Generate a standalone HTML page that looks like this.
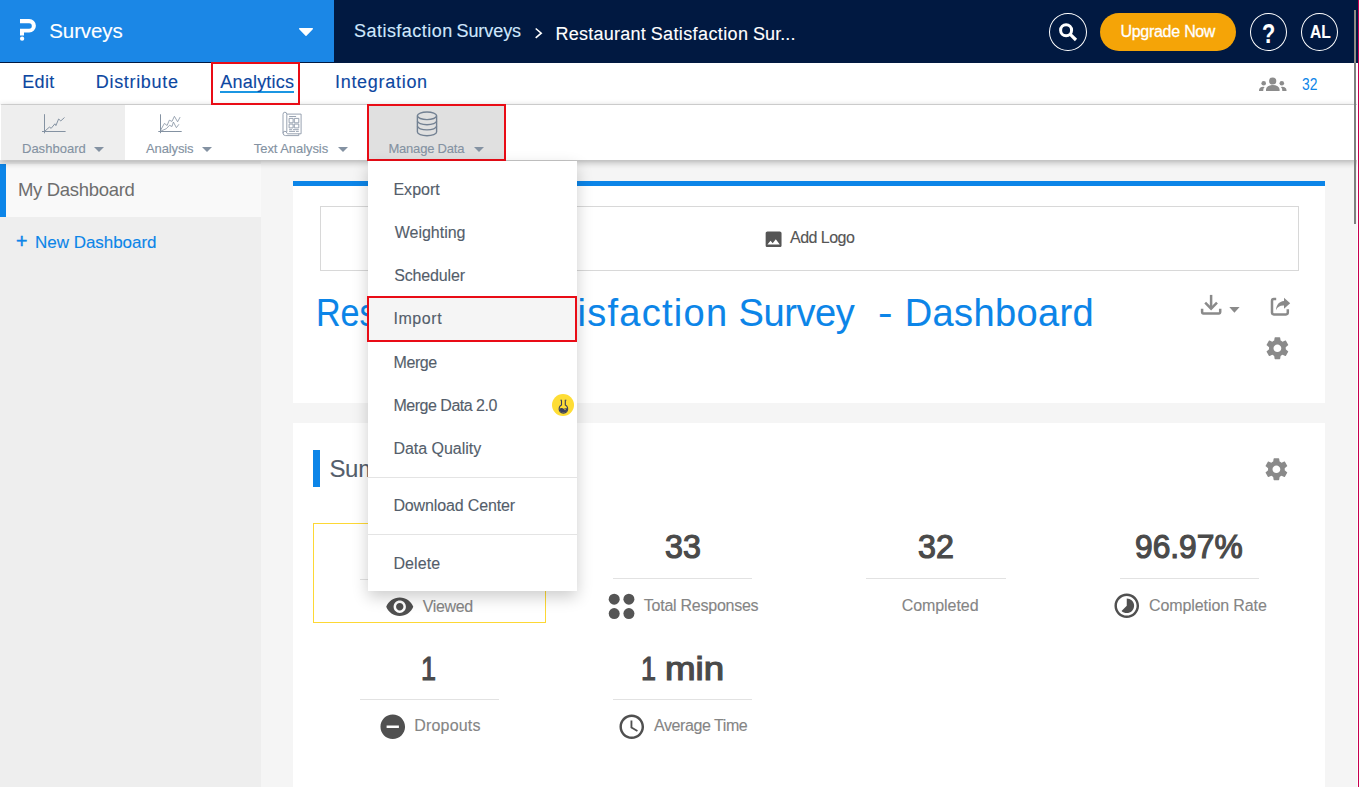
<!DOCTYPE html>
<html lang="en">
<head>
<meta charset="utf-8">
<title>Restaurant Satisfaction Survey - Dashboard</title>
<style>
*{box-sizing:border-box;margin:0;padding:0}
html,body{width:1359px;height:787px;overflow:hidden;background:#f5f5f5;font-family:"Liberation Sans",sans-serif;}
body{position:relative}
.abs{position:absolute}
svg{position:absolute;overflow:visible}
.t{position:absolute;white-space:nowrap;line-height:1;z-index:8;-webkit-text-stroke:0.12px}
#hdr{left:0;top:0;width:1359px;height:63px;background:#011941}
#hdrblue{left:0;top:0;width:334px;height:62px;background:#1b87e6}
#tabs{left:0;top:63px;width:1359px;height:42px;background:#fff}
#tabsline{left:1px;top:104px;width:1356px;height:1px;background:#dcdcdc}
#tool{left:0;top:105px;width:1359px;height:55px;background:#fff;box-shadow:0 2px 7px rgba(0,0,0,.3);z-index:5}
#tooldash{left:1px;top:105px;width:124px;height:55px;background:#eeeeee;z-index:6}
#toolmd{left:367px;top:104px;width:139px;height:57px;background:#e0e0e0;border:2px solid #e90c16;z-index:6}
#anbox{left:211px;top:62px;width:89px;height:43px;border:2px solid #e90c16;z-index:6}
#anul{left:220px;top:91px;width:74px;height:2px;background:#1b96e2}
#side{left:0;top:161px;width:261px;height:626px;background:#eeeeee}
#sideitem{left:0;top:164px;width:261px;height:53px;background:#f9f9f9;border-left:6px solid #0c85e8}
#card1{left:293px;top:181px;width:1032px;height:222px;background:#fff;border-top:5px solid #0c85e8}
#logo{left:320px;top:206px;width:979px;height:65px;border:1px solid #d8d8d8;background:#fff}
#card2{left:293px;top:423px;width:1032px;height:364px;background:#fff}
#sumbar{left:313px;top:450px;width:7px;height:37px;background:#0c85e8}
#ybox{left:313px;top:523px;width:233px;height:100px;border:1px solid #fdd835}
.hr{position:absolute;height:1px;background:#e2e2e2;width:139px}
#dd{left:368px;top:161px;width:209px;height:430px;background:#fff;box-shadow:0 6px 15px rgba(0,0,0,.2);z-index:20}
#ddimp{left:367px;top:296px;width:210px;height:46px;background:#f5f5f5;border:2px solid #e90c16;z-index:21}
.ddsep{position:absolute;left:368px;width:209px;height:1px;background:#e4e4e4;z-index:22}
#flask{left:552px;top:393.800px;width:22.200px;height:22.200px;border-radius:50%;background:#fedd35;z-index:22}
.circ{position:absolute;width:38px;height:38px;border:1px solid #fff;border-radius:50%;top:13px}
#upg{left:1100px;top:13px;width:136px;height:38px;border-radius:19px;background:#f5a407}
#sb{left:1354px;top:10px;width:2px;height:214px;background:linear-gradient(#8f8b85 0,#8f8b85 53px,#7f7f7f 53px);z-index:40}
#sbw{left:1357px;top:63px;width:1px;height:724px;background:#fff;z-index:40}
#sbp{left:1358px;top:0;width:1px;height:787px;background:#c8004f;z-index:40}
.car{position:absolute;width:0;height:0;border-left:5px solid transparent;border-right:5px solid transparent;border-top:5px solid #8492a2;z-index:7}
.z7{z-index:7}
.tw span{position:absolute;top:0}
</style>
</head>
<body>
<header>
<div id="hdr" class="abs"></div>
<div id="hdrblue" class="abs"></div>
<div class="circ" style="left:1048.9px;width:38.3px;height:38.4px;top:12.7px"></div>
<div id="upg" class="abs"></div>
<div class="circ" style="left:1249.9px;width:37.3px;height:38.4px;top:12.9px"></div>
<div class="circ" style="left:1300.9px;width:37.3px;height:38.4px;top:12.9px"></div>
<svg style="left:19px;top:18px;z-index:8" width="18" height="24" viewBox="19 18 18 24"><path d="M20 19H29.200a6.700 6.750 0 0 1 0 13.500H24V35.600H20V28.700H29.200a2.600 2.750 0 0 0 0-5.500H20Z" fill="#fff"/><circle cx="22.100" cy="38.700" r="2.150" fill="#fff"/></svg>
<svg style="left:298px;top:27px;z-index:8" width="16" height="10" viewBox="298 27 16 10"><path d="M299.700 28.700H312.300L306 35.300Z" fill="#fff" stroke="#fff" stroke-width="1.400" stroke-linejoin="round"/></svg>
<svg style="left:533px;top:26px;z-index:8" width="10" height="14" viewBox="533 26 10 14"><path d="M535.700 28.500L541.200 33.200L535.700 37.900" fill="none" stroke="#fff" stroke-width="1.600"/></svg>
<svg style="left:1056px;top:20px;z-index:8" width="24" height="24" viewBox="1056 20 24 24"><circle cx="1066.1" cy="30.2" r="5.5" fill="none" stroke="#fff" stroke-width="3"/><path d="M1070.3 34.4L1076 40" stroke="#fff" stroke-width="3.2" stroke-linecap="butt"/></svg>
<div class="t" style="left:49.26px;top:21px;font-size:20.5px;color:#fff;letter-spacing:-0.095px;">Surveys</div>
<div class="t" style="left:1262.02px;top:20px;font-size:27.5px;color:#fff;font-weight:700;transform:scaleX(0.7872);transform-origin:0 0;">?</div>
<div class="t" style="left:1309.56px;top:22px;font-size:19px;color:#fff;font-weight:700;transform:scaleX(0.8176);transform-origin:0 0;">AL</div>
<div class="t tw" style="left:0;top:22px;font-size:18px;color:#cfe7fd;"><span style="left:353.94px;letter-spacing:0.484px;">Satisfaction</span> <span style="left:456.44px;letter-spacing:-0.066px;">Surveys</span></div>
<div class="t tw" style="left:0;top:25px;font-size:18px;color:#fff;"><span style="left:555.49px;letter-spacing:0.233px;">Restaurant</span> <span style="left:650.64px;letter-spacing:0.393px;">Satisfaction</span> <span style="left:753.04px;letter-spacing:0.074px;">Sur...</span></div>
<div class="t tw" style="left:0;top:24px;font-size:16px;color:#fff;-webkit-text-stroke:0.3px #fff;"><span style="left:1120.40px;letter-spacing:-0.271px;">Upgrade</span> <span style="left:1184.35px;letter-spacing:-0.577px;">Now</span></div>
</header>
<nav>
<div id="tabs" class="abs"></div>
<div id="tabsline" class="abs"></div>
<div id="anul" class="abs"></div>
<div id="anbox" class="abs"></div>
<svg style="left:1259px;top:77px;z-index:8" width="28" height="15" viewBox="1259 77 28 15" fill="#8c8c8c"><circle cx="1272.7" cy="81" r="3.6"/><path d="M1266 91 v-1.5 a6.8 4.6 0 0 1 13.6 0 V91Z"/><circle cx="1263.7" cy="83.3" r="2.3"/><circle cx="1281.8" cy="83.3" r="2.3"/><path d="M1259 91 v-1 a4 3.2 0 0 1 5.6-2.9 a8 6 0 0 0 -1.4 3.9Z"/><path d="M1286.5 91 v-1 a4 3.2 0 0 0 -5.6-2.9 a8 6 0 0 1 1.4 3.9Z"/></svg>
<div class="t" style="left:22.19px;top:73px;font-size:18px;color:#0d47a1;letter-spacing:0.376px;">Edit</div>
<div class="t" style="left:95.79px;top:73px;font-size:18px;color:#0d47a1;letter-spacing:0.679px;">Distribute</div>
<div class="t" style="left:220.20px;top:73px;font-size:18px;color:#0d47a1;letter-spacing:0.230px;">Analytics</div>
<div class="t" style="left:334.99px;top:73px;font-size:18px;color:#0d47a1;letter-spacing:0.706px;">Integration</div>
<div class="t" style="left:1302.07px;top:77px;font-size:16px;color:#0c85e8;transform:scaleX(0.8649);transform-origin:0 0;-webkit-text-stroke:0;">32</div>
</nav>
<aside>
<div id="side" class="abs"></div>
<div id="sideitem" class="abs"></div>
<div class="t" style="left:17.95px;top:181px;font-size:18.5px;color:#6e6e6e;letter-spacing:-0.311px;-webkit-text-stroke:0;">My Dashboard</div>
<div class="t" style="left:16.09px;top:232px;font-size:19.5px;color:#0c85e8;-webkit-text-stroke:0.5px;">+</div>
<div class="t" style="left:35.07px;top:234px;font-size:17px;color:#0c85e8;letter-spacing:-0.035px;">New Dashboard</div>
</aside>
<main>
<section>
<div id="card1" class="abs"></div>
<div id="logo" class="abs"></div>
<svg style="left:763.45px;top:228.9px;z-index:8" width="21.2" height="20.7" viewBox="0 0 24 24" preserveAspectRatio="none"><path fill="#555" d="M21 19V5c0-1.100-.900-2-2-2H5c-1.100 0-2 .900-2 2v14c0 1.100.900 2 2 2h14c1.100 0 2-.900 2-2zM8.500 13.500l2.500 3.010L14.500 12l4.500 6H5l3.500-4.500z"/></svg>
<svg style="left:1200px;top:294px;z-index:8" width="22" height="22" viewBox="1200 294 22 22" fill="none" stroke="#8a8a8a" stroke-width="2.5"><path d="M1211.1 294.9V308.5"/><path d="M1205.2 302.6L1211.1 308.6L1217 302.6"/><path d="M1202.1 308.8V312.1a1.3 1.3 0 0 0 1.300 1.300H1218.900a1.300 1.300 0 0 0 1.300-1.300V308.800"/></svg>
<svg style="left:1229px;top:307px;z-index:8" width="11" height="6" viewBox="0 0 11 6"><path d="M0.3 0H10.6L5.4 5.800Z" fill="#8a8a8a"/></svg>
<svg style="left:1270px;top:297px;z-index:8" width="21" height="19" viewBox="1270 297 21 19"><path d="M1276.200 299H1273.800a1.800 1.800 0 0 0 -1.800 1.800V312.600a1.800 1.800 0 0 0 1.800 1.800H1286a1.800 1.800 0 0 0 1.800-1.800V309.300" fill="none" stroke="#8a8a8a" stroke-width="2.5"/><path d="M1284 297.700L1290.200 303.200L1284 308.700V305.600C1280 305.400 1277.500 307 1276 310.200C1276.200 305 1279 301.500 1284 301Z" fill="#8a8a8a"/></svg>
<svg style="left:1263.6px;top:334.600px;z-index:8" width="26.800" height="26.500" viewBox="0 0 24 24" preserveAspectRatio="none"><path fill="#8a8a8a" d="M19.43 12.98c.04-.32.07-.64.07-.98s-.03-.66-.07-.98l2.11-1.65c.19-.15.24-.42.12-.64l-2-3.46c-.12-.22-.39-.3-.61-.22l-2.49 1c-.52-.4-1.08-.73-1.69-.98l-.38-2.65C14.46 2.18 14.25 2 14 2h-4c-.25 0-.46.18-.49.42l-.38 2.65c-.61.25-1.17.59-1.69.98l-2.49-1c-.23-.09-.49 0-.61.22l-2 3.46c-.13.22-.07.49.12.64l2.11 1.65c-.04.32-.07.65-.07.98s.03.66.07.98l-2.11 1.65c-.19.15-.24.42-.12.64l2 3.46c.12.22.39.3.61.22l2.49-1c.52.4 1.08.73 1.69.98l.38 2.65c.03.24.24.42.49.42h4c.25 0 .46-.18.49-.42l.38-2.65c.61-.25 1.17-.59 1.69-.98l2.49 1c.23.09.49 0 .61-.22l2-3.46c.12-.22.07-.49-.12-.64l-2.11-1.65zM12 15.5c-1.93 0-3.5-1.57-3.5-3.5s1.57-3.5 3.5-3.500 3.500 1.570 3.500 3.500-1.570 3.500-3.500 3.500z"/></svg>
<div class="t" style="left:790.00px;top:230px;font-size:16px;color:#555;letter-spacing:-0.523px;">Add Logo</div>
<div class="t tw" style="left:0;top:294px;font-size:38px;color:#0c85e8;"><span style="left:316.14px;transform:scaleX(0.8960);transform-origin:0 0;">Restaurant</span> <span style="left:516.81px;letter-spacing:1.253px;">Satisfaction</span> <span style="left:738.41px;letter-spacing:-0.376px;">Survey</span> <span style="left:878.44px;transform:scaleX(1.1492);transform-origin:0 0;">-</span> <span style="left:904.63px;letter-spacing:0.400px;">Dashboard</span></div>
</section>
<section>
<div id="card2" class="abs"></div>
<div id="sumbar" class="abs"></div>
<div id="ybox" class="abs"></div>
<div class="hr" style="left:360px;top:579px"></div>
<div class="hr" style="left:613px;top:578px"></div>
<div class="hr" style="left:866px;top:578px;width:140px"></div>
<div class="hr" style="left:1120px;top:578px"></div>
<div class="hr" style="left:360px;top:699px"></div>
<div class="hr" style="left:613px;top:699px"></div>
<svg style="left:1262.500px;top:455.800px;z-index:8" width="26.800" height="26.500" viewBox="0 0 24 24" preserveAspectRatio="none"><path fill="#8a8a8a" d="M19.43 12.98c.04-.32.07-.64.07-.98s-.03-.66-.07-.98l2.11-1.65c.19-.15.24-.42.12-.64l-2-3.46c-.12-.22-.39-.3-.61-.22l-2.49 1c-.52-.4-1.08-.73-1.69-.98l-.38-2.65C14.46 2.18 14.25 2 14 2h-4c-.25 0-.46.18-.49.42l-.38 2.65c-.61.25-1.17.59-1.69.98l-2.49-1c-.23-.09-.49 0-.61.22l-2 3.46c-.13.22-.07.49.12.64l2.11 1.65c-.04.32-.07.65-.07.98s.03.66.07.98l-2.11 1.65c-.19.15-.24.42-.12.64l2 3.46c.12.22.39.3.61.22l2.49-1c.52.4 1.08.73 1.69.98l.38 2.65c.03.24.24.42.49.42h4c.25 0 .46-.18.49-.42l.38-2.65c.61-.25 1.17-.59 1.69-.98l2.49 1c.23.09.49 0 .61-.22l2-3.46c.12-.22.07-.49-.12-.64l-2.11-1.65zM12 15.5c-1.93 0-3.5-1.57-3.5-3.5s1.57-3.5 3.5-3.500 3.500 1.570 3.500 3.500-1.570 3.500-3.500 3.500z"/></svg>
<svg style="left:385.45px;top:592.45px;z-index:8" width="29.5" height="29.5" viewBox="0 0 24 24"><path fill="#505050" d="M12 4.500C7 4.500 2.730 7.610 1 12c1.730 4.390 6 7.500 11 7.500s9.270-3.110 11-7.500c-1.730-4.390-6-7.500-11-7.500zM12 17c-2.760 0-5-2.240-5-5s2.240-5 5-5 5 2.240 5 5-2.240 5-5 5zm0-8c-1.660 0-3 1.340-3 3s1.340 3 3 3 3-1.340 3-3-1.340-3-3-3z"/></svg>
<svg style="left:608px;top:593px;z-index:8" width="27" height="27" viewBox="608 593 27 27" fill="#555"><circle cx="614.2" cy="599.2" r="5.5"/><circle cx="628.9" cy="599.2" r="5.5"/><circle cx="614.2" cy="613.6" r="5.5"/><circle cx="628.9" cy="613.6" r="5.5"/></svg>
<svg style="left:1112.25px;top:591.4px;z-index:8" width="29.5" height="29.5" viewBox="0 0 24 24"><path fill="#505050" d="M16.240 7.760C15.070 6.590 13.540 6 12 6v6l-4.240 4.240c2.340 2.340 6.140 2.340 8.490 0 2.340-2.340 2.340-6.140-.010-8.480zM12 2C6.480 2 2 6.480 2 12s4.480 10 10 10 10-4.480 10-10S17.520 2 12 2zm0 18c-4.420 0-8-3.580-8-8s3.580-8 8-8 8 3.580 8 8-3.580 8-8 8z"/></svg>
<svg style="left:378.1px;top:712.3px;z-index:8" width="29.5" height="29.5" viewBox="0 0 24 24"><path fill="#505050" d="M12 2C6.480 2 2 6.480 2 12s4.480 10 10 10 10-4.480 10-10S17.520 2 12 2zm5 11H7v-2h10v2z"/></svg>
<svg style="left:617.25px;top:712.3px;z-index:8" width="29.5" height="29.5" viewBox="0 0 24 24"><path fill="#505050" d="M11.990 2C6.470 2 2 6.480 2 12s4.470 10 9.990 10C17.520 22 22 17.520 22 12S17.520 2 11.990 2zM12 20c-4.420 0-8-3.580-8-8s3.580-8 8-8 8 3.580 8 8-3.580 8-8 8zm.500-13H11v6l5.250 3.150.750-1.230-4.500-2.670z"/></svg>
<div class="t" style="left:329.45px;top:457px;font-size:24px;color:#545e6b;letter-spacing:-0.322px;">Summary</div>
<div class="t" style="left:664.74px;top:530px;font-size:33px;color:#4a4a4a;transform:scaleX(0.9756);transform-origin:0 0;-webkit-text-stroke:1.2px #4a4a4a;">33</div>
<div class="t" style="left:643.85px;top:598px;font-size:16px;color:#858585;letter-spacing:-0.253px;">Total Responses</div>
<div class="t" style="left:918.04px;top:530px;font-size:33px;color:#4a4a4a;transform:scaleX(0.9756);transform-origin:0 0;-webkit-text-stroke:1.2px #4a4a4a;">32</div>
<div class="t" style="left:901.65px;top:598px;font-size:16px;color:#858585;letter-spacing:-0.053px;">Completed</div>
<div class="t" style="left:1135.41px;top:530px;font-size:33px;color:#4a4a4a;transform:scaleX(0.9617);transform-origin:0 0;-webkit-text-stroke:1.2px #4a4a4a;">96.97%</div>
<div class="t" style="left:1149.05px;top:598px;font-size:16px;color:#858585;letter-spacing:-0.098px;">Completion Rate</div>
<div class="t" style="left:420.72px;top:652px;font-size:33px;color:#4a4a4a;transform:scaleX(0.8159);transform-origin:0 0;-webkit-text-stroke:1.2px #4a4a4a;">1</div>
<div class="t" style="left:414.25px;top:718px;font-size:16px;color:#858585;letter-spacing:0.190px;">Dropouts</div>
<div class="t" style="left:654.10px;top:718px;font-size:16px;color:#858585;letter-spacing:-0.433px;">Average Time</div>
<div class="t" style="left:422.80px;top:599px;font-size:16px;color:#858585;letter-spacing:-0.378px;">Viewed</div>
<div class="t tw" style="left:0;top:652px;font-size:33px;color:#4a4a4a;-webkit-text-stroke:1.2px #4a4a4a;"><span style="left:641.22px;transform:scaleX(0.8159);transform-origin:0 0;">1</span> <span style="left:664.91px;transform:scaleX(1.1125);transform-origin:0 0;">min</span></div>
</section>
</main>
<div role="toolbar">
<div id="tool" class="abs"></div>
<div id="tooldash" class="abs"></div>
<div id="toolmd" class="abs"></div>
<div class="car" style="left:94px;top:147px"></div>
<div class="car" style="left:202px;top:147px"></div>
<div class="car" style="left:338px;top:147px"></div>
<div class="car" style="left:474px;top:147px"></div>
<svg style="left:42px;top:114px;z-index:8" width="24" height="20" viewBox="42 114 24 20" fill="none" stroke="#8492a2" stroke-width="1"><path d="M44.5 114.2V133.3M42 131.5H65.6"/><path d="M44.5 131.5L49.4 127.1L51.2 128.3L54.9 123.8L55.9 125.6L58.6 119L60.8 120.9L64.5 117.5"/></svg>
<svg style="left:158px;top:114px;z-index:8" width="24" height="20" viewBox="158 114 24 20" fill="none" stroke="#8492a2" stroke-width="1"><path d="M160.500 114.300V133.200M158.300 131.500H181.700"/><path stroke-width="0.800" d="M160.600 130.200L164.400 123.400L167.100 125.500L169.300 120.200L172 121.400L174.400 116.300L177.600 121.800L180.100 117.100"/><path stroke-width="0.800" d="M160.600 131.200L166.300 128.700L169.500 125.300L172 126.500L173.400 122L176.400 127.700L178.900 124.300"/></svg>
<svg style="left:282px;top:111px;z-index:8" width="20" height="26" viewBox="282 111 20 26" fill="none" stroke="#8d99a9" stroke-width="0.9"><path d="M286.8 114.1H301.1V133.8H289"/><path d="M286.8 132V114.4a1.9 2.2 0 0 0 -3.8 0V133a2.6 2.6 0 0 0 2.6 2.6H298.8V133.8"/><path d="M283 133.2a1.9 1.9 0 0 1 3.8 0a2 2 0 0 0 2.2 .6"/><path d="M289.1 116.5h7M289.1 118.4h4v4.4h-4zM294.3 118.4h4.5v4.4h-4.5zM289.1 124.1h4v3.8h-4zM294.3 124.1h4.5v3.8h-4.5zM289.1 129.7h3M293 129.7h5.8M289.1 131.4h6M296 131.4h2.8"/></svg>
<svg style="left:416px;top:111px;z-index:8" width="22" height="26" viewBox="416 111 22 26" fill="none" stroke="#728092" stroke-width="1.400"><ellipse cx="427" cy="115.800" rx="9.600" ry="3.800"/><path d="M417.400 115.800V131.900a9.600 3.800 0 0 0 19.200 0V115.800"/><path d="M417.400 120.900a9.600 3.800 0 0 0 19.200 0M417.400 126.100a9.600 3.800 0 0 0 19.200 0"/></svg>
<div class="t" style="left:21.98px;top:142px;font-size:13px;color:#8492a2;letter-spacing:0.019px;">Dashboard</div>
<div class="t" style="left:146.00px;top:142px;font-size:13px;color:#8492a2;letter-spacing:-0.114px;">Analysis</div>
<div class="t" style="left:253.80px;top:142px;font-size:13px;color:#8492a2;letter-spacing:-0.063px;">Text Analysis</div>
<div class="t" style="left:388.48px;top:142px;font-size:13px;color:#8492a2;letter-spacing:-0.212px;">Manage Data</div>
</div>
<div role="menu">
<div id="dd" class="abs"></div>
<div id="ddimp" class="abs"></div>
<div class="ddsep" style="top:477px"></div>
<div class="ddsep" style="top:534px"></div>
<div id="flask" class="abs"></div>
<svg style="left:557px;top:399px;z-index:23" width="12" height="15" viewBox="557 399 12 15"><path d="M560.4 400.200H562M564.800 400.200H566.400" stroke="#3a3f5c" stroke-width="0.900"/><path d="M561.500 400.200V405A4.300 4.300 0 1 0 565.300 405V400.200" fill="none" stroke="#3a3f5c" stroke-width="1.100"/><path d="M559.500 408.600A3.900 3.900 0 0 0 567.300 408.600C565.500 407.700 564.300 409.300 563 408.500S560.600 408 559.500 408.600Z" fill="#3a3f5c"/><circle cx="565" cy="409.600" r="0.700" fill="#fedd35"/></svg>
<div class="t" style="left:393.45px;top:182px;font-size:16px;color:#545e6b;letter-spacing:0.011px;z-index:30;">Export</div>
<div class="t" style="left:394.70px;top:225px;font-size:16px;color:#545e6b;letter-spacing:-0.008px;z-index:30;">Weighting</div>
<div class="t" style="left:394.20px;top:268px;font-size:16px;color:#545e6b;letter-spacing:-0.159px;z-index:30;">Scheduler</div>
<div class="t" style="left:393.45px;top:311px;font-size:16px;color:#545e6b;letter-spacing:0.570px;z-index:30;">Import</div>
<div class="t" style="left:393.45px;top:355px;font-size:16px;color:#545e6b;letter-spacing:-0.388px;z-index:30;">Merge</div>
<div class="t" style="left:393.45px;top:398px;font-size:16px;color:#545e6b;letter-spacing:-0.487px;z-index:30;">Merge Data 2.0</div>
<div class="t" style="left:393.45px;top:441px;font-size:16px;color:#545e6b;letter-spacing:-0.026px;z-index:30;">Data Quality</div>
<div class="t" style="left:393.45px;top:498px;font-size:16px;color:#545e6b;letter-spacing:-0.143px;z-index:30;">Download Center</div>
<div class="t" style="left:393.45px;top:556px;font-size:16px;color:#545e6b;letter-spacing:0.090px;z-index:30;">Delete</div>
</div>
<div id="sb" class="abs"></div>
<div id="sbw" class="abs"></div>
<div id="sbp" class="abs"></div>
</body>
</html>
